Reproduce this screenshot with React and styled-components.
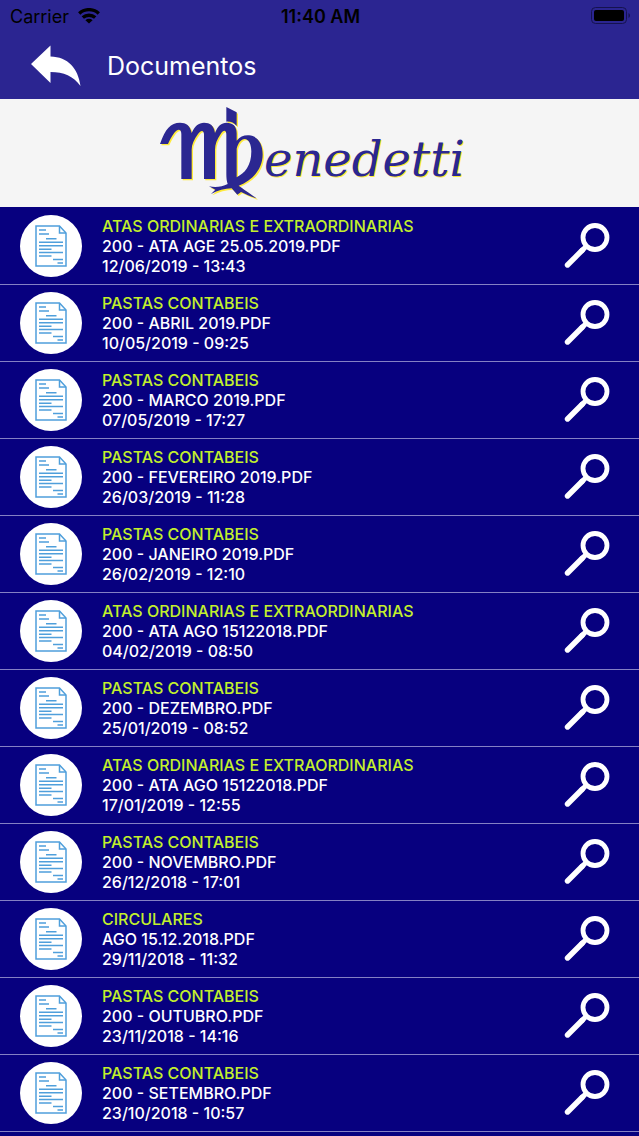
import React from 'react';
import styled, { createGlobalStyle } from 'styled-components';

const documents = [
    { id: 1, category: 'ATAS ORDINARIAS E EXTRAORDINARIAS', file: '200 - ATA AGE 25.05.2019.PDF', date: '12/06/2019 - 13:43' },
    { id: 2, category: 'PASTAS CONTABEIS', file: '200 - ABRIL 2019.PDF', date: '10/05/2019 - 09:25' },
    { id: 3, category: 'PASTAS CONTABEIS', file: '200 - MARCO 2019.PDF', date: '07/05/2019 - 17:27' },
    { id: 4, category: 'PASTAS CONTABEIS', file: '200 - FEVEREIRO 2019.PDF', date: '26/03/2019 - 11:28' },
    { id: 5, category: 'PASTAS CONTABEIS', file: '200 - JANEIRO 2019.PDF', date: '26/02/2019 - 12:10' },
    { id: 6, category: 'ATAS ORDINARIAS E EXTRAORDINARIAS', file: '200 - ATA AGO 15122018.PDF', date: '04/02/2019 - 08:50' },
    { id: 7, category: 'PASTAS CONTABEIS', file: '200 - DEZEMBRO.PDF', date: '25/01/2019 - 08:52' },
    { id: 8, category: 'ATAS ORDINARIAS E EXTRAORDINARIAS', file: '200 - ATA AGO 15122018.PDF', date: '17/01/2019 - 12:55' },
    { id: 9, category: 'PASTAS CONTABEIS', file: '200 - NOVEMBRO.PDF', date: '26/12/2018 - 17:01' },
    { id: 10, category: 'CIRCULARES', file: 'AGO 15.12.2018.PDF', date: '29/11/2018 - 11:32' },
    { id: 11, category: 'PASTAS CONTABEIS', file: '200 - OUTUBRO.PDF', date: '23/11/2018 - 14:16' },
    { id: 12, category: 'PASTAS CONTABEIS', file: '200 - SETEMBRO.PDF', date: '23/10/2018 - 10:57' },
];

export default function App() {
    return (
        <>
            <GlobalStyle />
            <Page>
                <Header>
                    <StatusBar>
                        <Carrier>
                            Carrier
                            <WifiIcon />
                        </Carrier>
                        <Clock>11:40 AM</Clock>
                        <BatteryIcon />
                    </StatusBar>
                    <TitleBar>
                        <IconButton type="button" aria-label="Voltar">
                            <BackIcon />
                        </IconButton>
                        <Title>Documentos</Title>
                    </TitleBar>
                </Header>
                <Banner>
                    <Logo />
                </Banner>
                <List>
                    {documents.map((doc) => (
                        <Row key={doc.id}>
                            <Avatar>
                                <DocumentIcon />
                            </Avatar>
                            <Info>
                                <Line $highlight>{doc.category}</Line>
                                <Line>{doc.file}</Line>
                                <Line>{doc.date}</Line>
                            </Info>
                            <IconButton type="button" aria-label={`Abrir ${doc.file}`}>
                                <SearchIcon />
                            </IconButton>
                        </Row>
                    ))}
                </List>
            </Page>
        </>
    );
}

function WifiIcon() {
    return (
        <svg width="22" height="16" viewBox="0 0 22 16" fill="none" stroke="#000" strokeWidth="3.4" aria-hidden="true">
            <path d="M1.2 5.4C6.8 .4 15.2 .4 20.8 5.4" />
            <path d="M4.8 9.6C8.4 6.4 13.6 6.4 17.2 9.6" />
            <path d="M11 15.6L7.4 12.2C9.5 10.4 12.5 10.4 14.6 12.2Z" fill="#000" stroke="none" />
        </svg>
    );
}

function BatteryIcon() {
    return (
        <svg width="40" height="18" viewBox="0 0 40 18" aria-label="Bateria" role="img">
            <rect x=".5" y=".5" width="35" height="16" rx="4" fill="none" stroke="#15124f" />
            <rect x="3" y="3" width="30" height="11" rx="2" fill="#000" />
            <path d="M37.5 6C39.5 7 39.5 10 37.5 11Z" fill="#15124f" />
        </svg>
    );
}

function BackIcon() {
    return (
        <svg width="50" height="42" viewBox="0 0 50 42" fill="#fff" aria-hidden="true">
            <path d="M0 19L19.5 .5V11.5C37 12 47 23 49.5 41C42 31 33 27 19.5 27V38Z" />
        </svg>
    );
}

function DocumentIcon() {
    return (
        <svg width="32" height="42" viewBox="0 0 32 42" fill="none" stroke="#4f9fdb" strokeWidth="1.5" aria-hidden="true">
            <path d="M1 1H24.5L31 8V41H1Z" />
            <path d="M24.5 1V8H31" />
            <path d="M4 5H11M4 9H14M11 13.7H21.5M4 17.3H28M4 20.7H28M4 24.3H16.5M4 27.6H28M4 31H16.5M18 34.4H28M22.5 38H28" />
        </svg>
    );
}

function SearchIcon() {
    return (
        <svg width="46" height="46" viewBox="0 0 46 46" fill="none" stroke="#fff" aria-hidden="true">
            <circle cx="31" cy="14.5" r="12" strokeWidth="4.8" />
            <path d="M22 23.5L17 28.5" strokeWidth="5" />
            <path d="M18.5 27L3.5 42" strokeWidth="5.4" strokeLinecap="round" />
        </svg>
    );
}

function LogoShapes() {
    return (
        <>
            <path d="M229 27L260 43V84C252 74 241 70 229 71Z" />
            <path d="M30 138C46 92 62 74 90 74C108 74 121 82 125 105C134 84 146 74 162 74C180 74 192 82 195 105C203 84 214 74 230 74C248 74 260 84 260 106V128C270 116 282 111 297 112C324 114 338 138 338 169C338 214 308 246 266 263C276 270 296 284 320 301C302 296 286 288 273 282L262 290L245 271C224 272 204 277 183 288L196 275L177 265C198 269 217 266 233 258C230 250 229 240 229 228V110C229 96 221 94 212 108C201 124 195 139 195 155V243H162V110C162 96 153 95 144 108C132 124 125 140 125 155V243H94V108C94 93 84 90 73 104C64 116 59 126 54 138ZM260 152V238C284 226 304 204 304 160C304 139 296 123 284 123C273 123 264 136 260 152Z" fillRule="evenodd" />
            <text x="342" y="233">enedetti</text>
        </>
    );
}

function Logo() {
    return (
        <LogoSvg viewBox="0 3 1020 324" role="img" aria-label="MBenedetti">
            <g fill="#ffeb3b" transform="translate(4 4)">
                <LogoShapes />
            </g>
            <g fill="#2b2791">
                <LogoShapes />
            </g>
        </LogoSvg>
    );
}

const GlobalStyle = createGlobalStyle`
    * {
        box-sizing: border-box;
    }

    body {
        margin: 0;
        background: #07007f;
        font-family: Inter, "Liberation Sans", sans-serif;
    }
`;

const Page = styled.div`
    min-height: 100vh;
    background: #07007f;
`;

const Header = styled.header`
    height: 99px;
    background: #2b2591;
`;

const StatusBar = styled.div`
    display: grid;
    grid-template-columns: 1fr auto 1fr;
    align-items: center;
    height: 32px;
    padding: 0 8px 0 10px;
    color: #000;
    font-size: 18px;

    > :last-child {
        justify-self: end;
    }
`;

const Carrier = styled.div`
    display: flex;
    align-items: center;
    gap: 9px;
`;

const Clock = styled.div`
    font-weight: 600;
`;

const TitleBar = styled.div`
    display: flex;
    align-items: center;
    gap: 26px;
    height: 67px;
    padding: 0 31px;
`;

const Title = styled.h1`
    margin: 0;
    color: #fff;
    font-size: 25px;
    font-weight: 400;
`;

const IconButton = styled.button`
    display: flex;
    flex-shrink: 0;
    padding: 0;
    border: none;
    background: none;
    cursor: pointer;
`;

const Banner = styled.div`
    display: flex;
    justify-content: center;
    background: #f5f5f5;
`;

const LogoSvg = styled.svg`
    width: 340px;
    height: 108px;

    text {
        font-family: "DejaVu Serif", serif;
        font-size: 144px;
        font-style: italic;
    }
`;

const List = styled.ul`
    margin: 0;
    padding: 1px 0 0;
    list-style: none;
`;

const Row = styled.li`
    display: flex;
    align-items: center;
    gap: 20px;
    height: 77px;
    padding: 0 29px 0 20px;
    border-bottom: 1px solid #8480c4;
`;

const Avatar = styled.div`
    display: flex;
    align-items: center;
    justify-content: center;
    flex-shrink: 0;
    width: 62px;
    height: 62px;
    border-radius: 50%;
    background: #fff;
`;

const Info = styled.div`
    flex: 1;
    min-width: 0;
`;

const Line = styled.p`
    margin: 0;
    color: ${({ $highlight }) => ($highlight ? '#c3f02c' : '#fff')};
    font-size: 16px;
    font-weight: 500;
    line-height: 20px;
`;
